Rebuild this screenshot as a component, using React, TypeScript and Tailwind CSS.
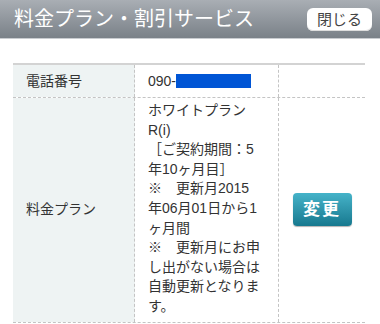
const font = "font-['Liberation_Sans','Noto_Sans_CJK_JP',sans-serif]";

const PlanHeader = (): JSX.Element => {
  return (
    <div className="h-[39px] flex items-center justify-between pl-[14px] pr-[8px] bg-gradient-to-b from-[#a9aeb4] to-[#7a8188] border-b border-[#c9ccd0]">
      <h1 className="text-[20px] leading-none text-white font-normal">
        料金プラン・割引サービス
      </h1>
      <button className="w-[65px] h-[23px] rounded-[6px] bg-white text-[15px] leading-none text-[#444] shadow-[inset_0_-1px_0_#ddd]">
        閉じる
      </button>
    </div>
  );
};

const App = (): JSX.Element => {
  return (
    <div className={`w-[380px] h-[324px] overflow-hidden bg-white ${font}`}>
      <PlanHeader />
      <div className="ml-[13px] mt-[24px] w-[352px] border-t-2 border-[#d3d3d3] text-[14px] text-[#333]">
        {/* 電話番号 row */}
        <div className="flex h-[33px] border-b border-dashed border-[#c4c4c4]">
          <div className="w-[122px] pl-[13px] flex items-center bg-[#eef3f3] border-r border-dashed border-[#c4c4c4]">
            電話番号
          </div>
          <div className="w-[144px] pl-[13px] flex items-center border-r border-dashed border-[#c4c4c4]">
            <span>090-</span>
            <span className="inline-block w-[75px] h-[14px] bg-[#0055d5]" />
          </div>
          <div className="flex-1" />
        </div>
        {/* 料金プラン row */}
        <div className="flex border-b border-dashed border-[#c4c4c4]">
          <div className="w-[122px] pl-[13px] flex items-center bg-[#eef3f3] border-r border-dashed border-[#c4c4c4]">
            料金プラン
          </div>
          <div className="w-[144px] pl-[13px] pr-[17px] pt-[3px] pb-[5px] leading-[19.6px] border-r border-dashed border-[#c4c4c4]">
            ホワイトプランR(i)
            <br />
            ［ご契約期間：5年10ヶ月目］
            <br />
            ※　更新月2015年06月01日から1ヶ月間
            <br />
            ※　更新月にお申し出がない場合は自動更新となります。
          </div>
          <div className="flex-1 flex items-center justify-center">
            <button className="w-[59px] h-[33px] rounded-[4px] bg-gradient-to-b from-[#45b3c9] to-[#16798f] text-white text-[17px] font-bold tracking-[2px] shadow-[0_1px_1px_rgba(0,0,0,0.3)]">
              変更
            </button>
          </div>
        </div>
      </div>
    </div>
  );
};

export default App;
